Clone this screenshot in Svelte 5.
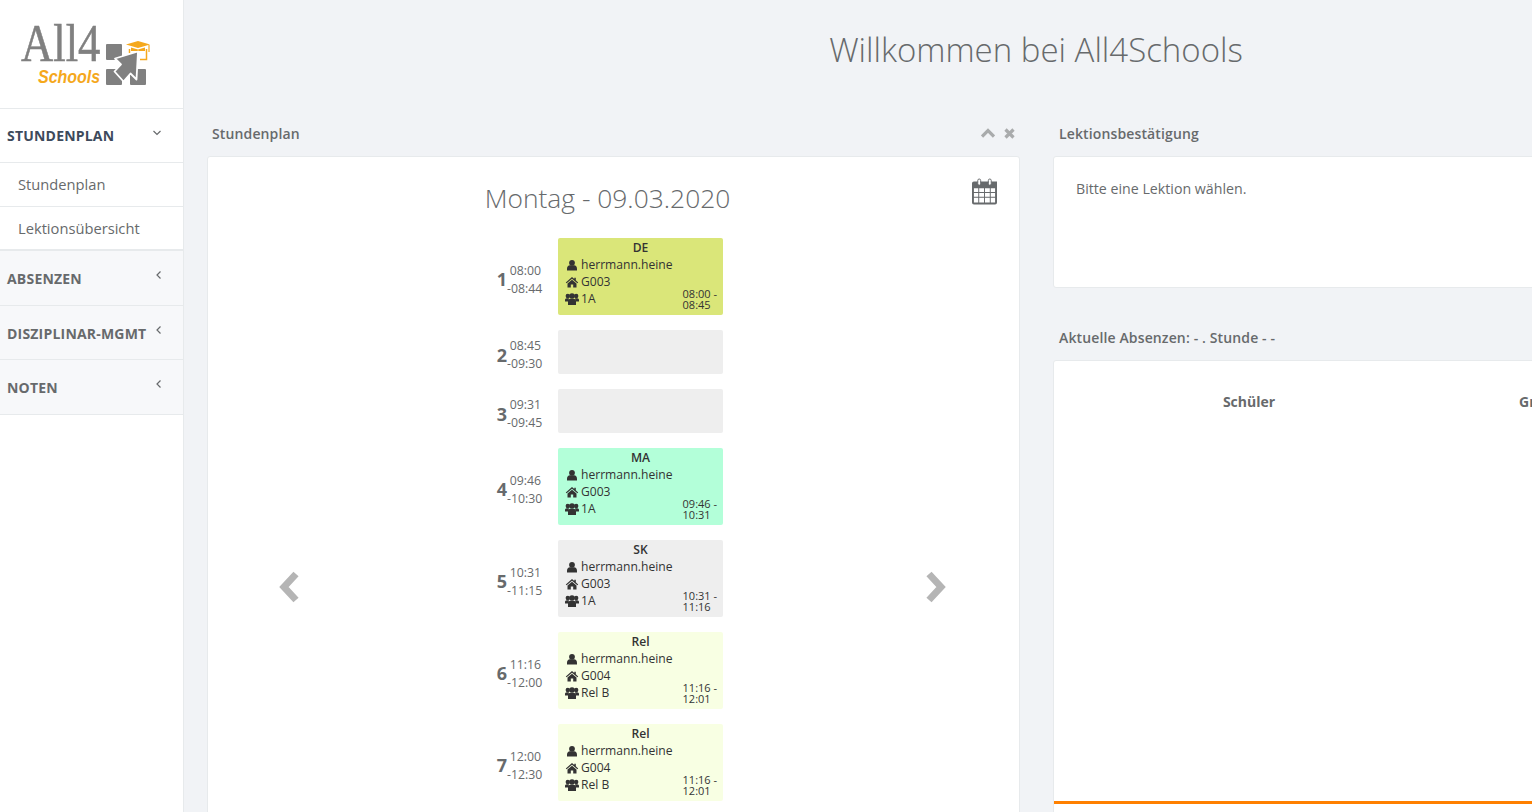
<script>
  const menu = [
    { label: "ABSENZEN" },
    { label: "DISZIPLINAR-MGMT" },
    { label: "NOTEN" }
  ];
  const lessons = [
    { n: 1, from: "08:00", to: "-08:44", subject: "DE", room: "G003", group: "1A", time: ["08:00 -", "08:45"], color: "#dae679" },
    { n: 2, from: "08:45", to: "-09:30", color: "#eeeeee" },
    { n: 3, from: "09:31", to: "-09:45", color: "#eeeeee" },
    { n: 4, from: "09:46", to: "-10:30", subject: "MA", room: "G003", group: "1A", time: ["09:46 -", "10:31"], color: "#b3ffd9" },
    { n: 5, from: "10:31", to: "-11:15", subject: "SK", room: "G003", group: "1A", time: ["10:31 -", "11:16"], color: "#eeeeee" },
    { n: 6, from: "11:16", to: "-12:00", subject: "Rel", room: "G004", group: "Rel B", time: ["11:16 -", "12:01"], color: "#f8ffe3" },
    { n: 7, from: "12:00", to: "-12:30", subject: "Rel", room: "G004", group: "Rel B", time: ["11:16 -", "12:01"], color: "#f8ffe3" }
  ];
</script>

<div class="page">
  <nav class="sidebar">
    <div class="logo">
      <svg width="183" height="108" viewBox="0 0 183 108">
        <text x="0" y="0" transform="translate(21 61) scale(0.93 1.12)" class="all4">All4</text>
        <text x="0" y="0" transform="translate(38 83) scale(1 1.15)" class="schools">Schools</text>
        <rect x="106" y="44" width="16" height="16" rx="1" fill="#808080" />
        <rect x="106" y="69" width="16" height="16" rx="1" fill="#808080" />
        <rect x="130" y="69" width="16" height="16" rx="1" fill="#808080" />
        <path d="M126 44.500L138 41l12 3.500-12 3.500z" fill="#f5a81c" />
        <path d="M131 47.500l7 2 7-2V51h-14z" fill="#f5a81c" />
        <path d="M149 45v7" stroke="#f5a81c" stroke-width="1.200" fill="none" />
        <path d="M129.500 49v4M146.500 49v10.500H140" stroke="#f5a81c" stroke-width="1.500" fill="none" />
        <path d="M138 51.500L115 58.500l6 6-6.500 7 9 10 7-8 6 6z" fill="#808080" stroke="#fff" stroke-width="1.800" stroke-linejoin="round" />
      </svg>
    </div>
    <div class="item open">
      <span>STUNDENPLAN</span>
      <svg class="chev" width="8" height="8" viewBox="0 0 8 8"><path d="M.5 2l3.500 3.500L7.500 2" /></svg>
    </div>
    <div class="sub">Stundenplan</div>
    <div class="sub last">Lektionsübersicht</div>
    {#each menu as m}
      <div class="item">
        <span>{m.label}</span>
        <svg class="chev" width="8" height="8" viewBox="0 0 8 8"><path d="M5.500.5L2 4l3.500 3.500" /></svg>
      </div>
    {/each}
  </nav>

  <main>
    <h1>Willkommen bei All4Schools</h1>
    <div class="cols">
      <section class="col">
        <header class="head">
          <h5>Stundenplan</h5>
          <div class="tools">
            <svg width="14" height="10" viewBox="0 0 14 10"><path d="M1 8.500L7 2.500l6 6" /></svg>
            <svg width="11" height="11" viewBox="0 0 11 11"><path d="M1.500 1.500l8 8M9.500 1.500l-8 8" /></svg>
          </div>
        </header>
        <div class="card plan">
          <h2>Montag - 09.03.2020</h2>
          <svg class="cal" width="25" height="27" viewBox="0 0 26 27">
            <path fill-rule="evenodd" fill="#676a6c" d="M2 3h24v22a2 2 0 0 1-2 2H2a2 2 0 0 1-2-2V5a2 2 0 0 1 2-2zM2 10v4h4.500v-4zM7.500 10v4h5v-4zM13.500 10v4h5v-4zM19.500 10v4H24v-4zM2 15v4h4.500v-4zM7.500 15v4h5v-4zM13.500 15v4h5v-4zM19.500 15v4H24v-4zM2 20v5h4.500v-5zM7.500 20v5h5v-5zM13.500 20v5h5v-5zM19.500 20v5H24v-5z" />
            <rect x="6" y="0.500" width="3" height="6.500" rx="1.500" fill="#fff" stroke="#676a6c" />
            <rect x="17" y="0.500" width="3" height="6.500" rx="1.500" fill="#fff" stroke="#676a6c" />
          </svg>
          <div class="arrows">
            <svg width="24" height="32" viewBox="0 0 24 32"><path d="M17 3L5 16l12 13" /></svg>
            <div class="list">
              {#each lessons as l}
                <div class="row">
                  <div class="num">{l.n}</div>
                  <div class="hours" class:short={!l.subject}><div>{l.from}</div><div>{l.to}</div></div>
                  <div class="lesson" class:empty={!l.subject} style="background: {l.color}">
                    {#if l.subject}
                      <div class="subject">{l.subject}</div>
                      <div class="line">
                        <svg width="14" height="12" viewBox="0 0 14 12"><circle cx="7" cy="3.800" r="2.900" /><path d="M2 11.500V9.500C2 7.800 3.300 6.300 4.800 6.300h4.400C10.700 6.300 12 7.800 12 9.500v2z" /></svg>
                        herrmann.heine
                      </div>
                      <div class="line">
                        <svg width="14" height="12" viewBox="0 0 14 12"><path d="M7 1L.8 6.400l.8.900L7 2.700l5.400 4.600.8-.9-2.400-2.100V1.800H9.300V3zM2.500 7.500L7 3.800l4.500 3.700V11.500H8.200V8.500H5.800v3H2.500z" /></svg>
                        {l.room}
                      </div>
                      <div class="line">
                        <svg width="14" height="12" viewBox="0 0 14 12"><circle cx="2.800" cy="3" r="2.200" /><circle cx="11.200" cy="3" r="2.200" /><circle cx="7" cy="3" r="2.800" /><path d="M0 8.500V7c0-1 .8-1.800 1.800-1.800H4L3 8.500zM14 8.500V7c0-1-.8-1.800-1.800-1.800H10l1 3.300zM3 12V9c0-2 1-3.200 2.500-3.200h3C10 5.800 11 7 11 9v3z" /></svg>
                        {l.group}
                      </div>
                      <div class="time"><div>{l.time[0]}</div><div>{l.time[1]}</div></div>
                    {/if}
                  </div>
                </div>
              {/each}
            </div>
            <svg class="next" width="24" height="32" viewBox="0 0 24 32"><path d="M7 3l12 13L7 29" /></svg>
          </div>
        </div>
      </section>

      <section class="col second-col">
        <header class="head"><h5>Lektionsbestätigung</h5></header>
        <div class="card confirm">Bitte eine Lektion wählen.</div>
        <header class="head second"><h5>Aktuelle Absenzen: - . Stunde - -</h5></header>
        <div class="card absences">
          <div class="th">
            <span>Schüler</span>
            <span>Grund</span>
          </div>
          <div class="rule"></div>
        </div>
      </section>
    </div>
  </main>
</div>

<style>
  :global(body) {
    margin: 0;
    overflow: hidden;
    background: #f1f3f6;
    font-family: "Open Sans", sans-serif;
    color: #676a6c;
  }
  .page {
    display: flex;
    width: 1888px;
    height: 812px;
    overflow: hidden;
  }
  .sidebar {
    flex: none;
    width: 183px;
    height: 812px;
    background: #fff;
    border-right: 1px solid #e7eaec;
  }
  .logo {
    height: 108px;
    border-bottom: 1px solid #e7eaec;
    overflow: hidden;
  }
  .logo svg { display: block; }
  .all4 {
    font-family: "Liberation Serif", serif;
    font-size: 48px;
    fill: #808080;
    stroke: #808080;
    stroke-width: 0.5;
  }
  .schools {
    font-family: "Liberation Sans", sans-serif;
    font-size: 16px;
    font-weight: 700;
    font-style: italic;
    fill: #f5a81c;
  }
  .item {
    display: flex;
    justify-content: space-between;
    box-sizing: border-box;
    height: 54.67px;
    padding: 0 20px 0 7px;
    background: #f7f8fa;
    border-bottom: 1px solid #e7eaec;
    font-size: 14px;
    font-weight: 700;
    line-height: 55px;
    color: #676a6c;
    letter-spacing: 0.2px;
  }
  .item.open {
    background: #fff;
    color: #3d4a5c;
    height: 54px;
    padding-right: 22px;
    line-height: 54px;
  }
  .chev {
    margin-top: 20px;
    fill: none;
    stroke: #676a6c;
    stroke-width: 1.2;
  }
  .sub {
    height: 43px;
    padding-left: 18px;
    border-bottom: 1px solid #e7eaec;
    font-size: 14.7px;
    line-height: 43px;
  }
  .sub.last { height: 42px; border-bottom-width: 2px; }
  main {
    flex: 1;
    min-width: 0;
  }
  h1 {
    margin: 0;
    padding-top: 27px;
    box-sizing: border-box;
    height: 112px;
    font-size: 33px;
    font-weight: 300;
    line-height: 46px;
    text-align: center;
    color: #676a6c;
  }
  .cols {
    display: grid;
    grid-template-columns: 813px 813px;
    gap: 33px;
    padding-left: 23px;
  }
  .head {
    display: flex;
    justify-content: space-between;
    align-items: center;
    box-sizing: border-box;
    height: 44px;
    padding: 0 5px 2px;
  }
  .second-col .head { padding-left: 6px; }
  .head.second { margin-top: 28px; }
  h5 {
    margin: 0;
    font-size: 14px;
    font-weight: 600;
    letter-spacing: 0.13px;
    color: #676a6c;
  }
  .tools {
    display: flex;
    align-items: center;
    gap: 9px;
  }
  .tools svg {
    fill: none;
    stroke: #a9abac;
    stroke-width: 3.2;
  }
  .card {
    box-sizing: border-box;
    background: #fff;
    border: 1px solid #e7eaec;
    border-radius: 3px;
  }
  .plan {
    position: relative;
    height: 700px;
  }
  h2 {
    margin: 0;
    padding: 23px 12px 0 0;
    height: 81px;
    box-sizing: border-box;
    font-size: 26.4px;
    font-weight: 300;
    line-height: 36px;
    text-align: center;
    color: #676a6c;
  }
  .cal {
    position: absolute;
    top: 21px;
    right: 22px;
  }
  .arrows {
    display: flex;
    align-items: flex-start;
    padding: 0 73px 0 71px;
  }
  .arrows > svg {
    margin-top: 333px;
    fill: none;
    stroke: #b5b5b5;
    stroke-width: 7;
  }
  .arrows > .next { margin-left: auto; }
  .list {
    display: flex;
    flex-direction: column;
    gap: 15px;
    margin-left: 193px;
  }
  .row {
    display: flex;
    align-items: center;
  }
  .num {
    width: 11px;
    padding-top: 5px;
    font-size: 18px;
    font-weight: 700;
    text-align: right;
  }
  .hours {
    width: 34px;
    margin-right: 17px;
    padding-top: 7px;
    font-size: 12.3px;
    line-height: 18px;
    text-align: right;
  }
  .hours.short { padding-top: 6px; }
  .lesson {
    position: relative;
    box-sizing: border-box;
    width: 165px;
    height: 77px;
    padding: 2px 7px;
    border-radius: 2px;
    font-size: 12.1px;
    line-height: 17px;
    color: #333;
  }
  .lesson.empty { height: 44px; }
  .subject {
    font-weight: 600;
    text-align: center;
    line-height: 16px;
  }
  .line {
    display: flex;
    align-items: center;
    gap: 2px;
    height: 17px;
  }
  .line svg {
    flex: none;
    fill: #333;
  }
  .time {
    position: absolute;
    right: 6px;
    bottom: 5px;
    font-size: 11px;
    line-height: 11px;
  }
  .confirm {
    height: 132px;
    padding: 22px;
    font-size: 14.2px;
    line-height: 19px;
  }
  .absences {
    height: 460px;
  }
  .th {
    display: grid;
    grid-template-columns: 390px 194px 1fr;
    box-sizing: border-box;
    height: 440px;
    padding-top: 31px;
    font-size: 14px;
    font-weight: 700;
    text-align: center;
  }
  .rule {
    height: 3px;
    background: #ff8000;
  }
</style>
